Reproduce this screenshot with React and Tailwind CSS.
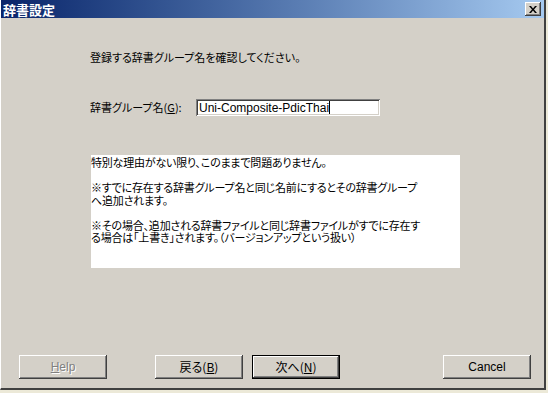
import React from "react";

const jp = "font-['MS_UI_Gothic','Noto_Sans_CJK_JP',sans-serif] [font-feature-settings:'palt']";

const raised =
  "shadow-[inset_-1px_-1px_0_#404040,inset_1px_1px_0_#ffffff,inset_-2px_-2px_0_#808080,inset_2px_2px_0_#d4d0c8]";

const Button = ({ children, isDefault, disabled, className = "" }) => (
  <div
    className={`w-[88px] h-[24px] flex items-center justify-center bg-[#d4d0c8] text-[12px] ${
      isDefault ? "border border-black" : ""
    } ${raised} ${disabled ? "text-[#808080] [text-shadow:1px_1px_0_#ffffff]" : "text-black"} ${className}`}
  >
    {children}
  </div>
);

export default function App() {
  return (
    <div className="w-[548px] h-[393px] bg-[#ece9d8] overflow-hidden">
      <div className="w-[546px] h-[390px] flex flex-col bg-[#d4d0c8] border-r-2 border-b-2 border-r-[#404040] border-b-[#404040] border-l border-l-[#ffffff]">
        {/* title bar */}
        <div className="h-[18px] flex items-center justify-between bg-gradient-to-r from-[#0a246a] to-[#a6caf0] pl-[2px] pr-[3px]">
          <span className={`${jp} text-white font-bold text-[13px] leading-none`}>辞書設定</span>
          <div className={`w-[16px] h-[14px] bg-[#d4d0c8] flex items-center justify-center ${raised}`}>
            <svg width="8" height="7" viewBox="0 0 8 7">
              <path d="M0 0h2l2 2.5L6 0h2L5 3.5 8 7H6L4 4.5 2 7H0l3-3.5z" fill="#000" />
            </svg>
          </div>
        </div>

        {/* body */}
        <div className={`flex-1 flex flex-col pl-[89px] ${jp} text-[11px] text-black`}>
          <p className="mt-[33px] leading-[13px]">登録する辞書グループ名を確認してください。</p>

          <div className="mt-[35px] flex items-center">
            <span className="leading-[13px] w-[106px]">
              辞書グループ名(<span className="underline">G</span>):
            </span>
            <div className="w-[184px] h-[17px] bg-white flex items-center pl-[3px] shadow-[inset_1px_1px_0_#808080,inset_-1px_-1px_0_#ffffff,inset_2px_2px_0_#404040,inset_-2px_-2px_0_#d4d0c8]">
              <span className="font-['Liberation_Sans',sans-serif] text-[12px] leading-none">Uni-Composite-PdicThai</span>
              <span className="w-px h-[13px] bg-black"></span>
            </div>
          </div>

          <div className="mt-[39px] ml-[1px] w-[369px] h-[113px] bg-white leading-[12.5px] tracking-[-0.2px] whitespace-nowrap pt-[1px]">
            <p>特別な理由がない限り、このままで問題ありません。</p>
            <p className="mt-[12.5px]">※すでに存在する辞書グループ名と同じ名前にするとその辞書グループ</p>
            <p>へ追加されます。</p>
            <p className="mt-[12.5px]">※その場合、追加される辞書ファイルと同じ辞書ファイルがすでに存在す</p>
            <p>る場合は「上書き」されます。（バージョンアップという扱い）</p>
          </div>
        </div>

        {/* buttons */}
        <div className={`flex items-center pl-[18px] pb-[9px] ${jp}`}>
          <Button disabled>
            <span className="font-['Liberation_Sans',sans-serif]">
              <span className="underline">H</span>elp
            </span>
          </Button>
          <Button className="ml-[48px]">
            戻る(<span className="underline">B</span>)
          </Button>
          <Button isDefault className="ml-[9px]">
            次へ(<span className="underline">N</span>)
          </Button>
          <Button className="ml-[103px]">
            <span className="font-['Liberation_Sans',sans-serif]">Cancel</span>
          </Button>
        </div>
      </div>
    </div>
  );
}
